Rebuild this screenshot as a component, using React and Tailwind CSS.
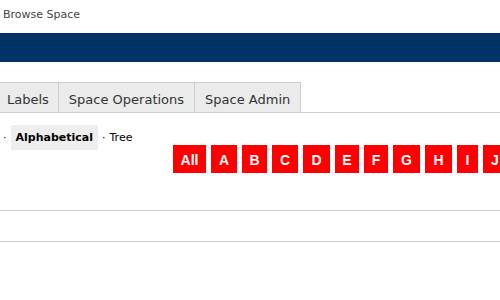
import React from "react";

const letters = [
  ["All", "w-[33px]"],
  ["A", "w-[26px]"],
  ["B", "w-[25px]"],
  ["C", "w-[26px]"],
  ["D", "w-[27px]"],
  ["E", "w-[24px]"],
  ["F", "w-[24px]"],
  ["G", "w-[27px]"],
  ["H", "w-[27px]"],
  ["I", "w-[21px]"],
  ["J", "w-[24px]"],
];

const tabs = [
  ["Labels", "border-t border-l border-[#cccccc] bg-[#ebebeb] pl-[10px] pr-[9px] pt-[9px] pb-[4px] text-[13px] leading-[16px] text-[#333]"],
  ["Space Operations", "border-t border-l border-[#cccccc] bg-[#ebebeb] px-[10px] pt-[9px] pb-[4px] text-[13px] leading-[16px] text-[#333]"],
  ["Space Admin", "border-t border-l border-r border-[#cccccc] bg-[#ebebeb] px-[10px] pt-[9px] pb-[4px] text-[13px] leading-[16px] text-[#333]"],
];

export default function App() {
  return (
    <div className="w-[500px] h-[300px] overflow-hidden bg-white" style={{ fontFamily: '"DejaVu Sans", Verdana, sans-serif' }}>
      <div className="h-[33px] pt-[7px] pl-[3px] text-[11px] leading-[15px] text-[#444]">Browse Space</div>
      <div className="h-[29px] bg-[#003366]" />
      <div className="mt-[20px] flex border-b border-[#cccccc] ml-[-4px]">
        {tabs.map(([t, cls]) => (
          <div key={t} className={cls}>
            {t}
          </div>
        ))}
      </div>
      <div className="mt-[12px] flex h-[25px] items-center text-[11px] text-black">
        <span className="ml-[3px] pt-[2px]">·</span>
        <span className="ml-[4px] h-[25px] bg-[#eeeeee] px-[5px] font-bold leading-[26px]">Alphabetical</span>
        <span className="ml-[4px] pt-[2px]">·</span>
        <span className="ml-[4px] pt-[2px]">Tree</span>
      </div>
      <div
        className="mt-[-5px] flex gap-[5px] pl-[173px] whitespace-nowrap"
        style={{ fontFamily: '"Liberation Sans", Arial, sans-serif' }}
      >
        {letters.map(([l, w]) => (
          <div key={l} className={`${w} shrink-0 h-[28px] bg-[#ff0000] pt-[2px] text-center text-[14px] font-bold leading-[26px] text-white`}>
            {l}
          </div>
        ))}
      </div>
      <div className="mt-[37px] h-[32px] border-t border-b border-[#cccccc]" />
    </div>
  );
}
